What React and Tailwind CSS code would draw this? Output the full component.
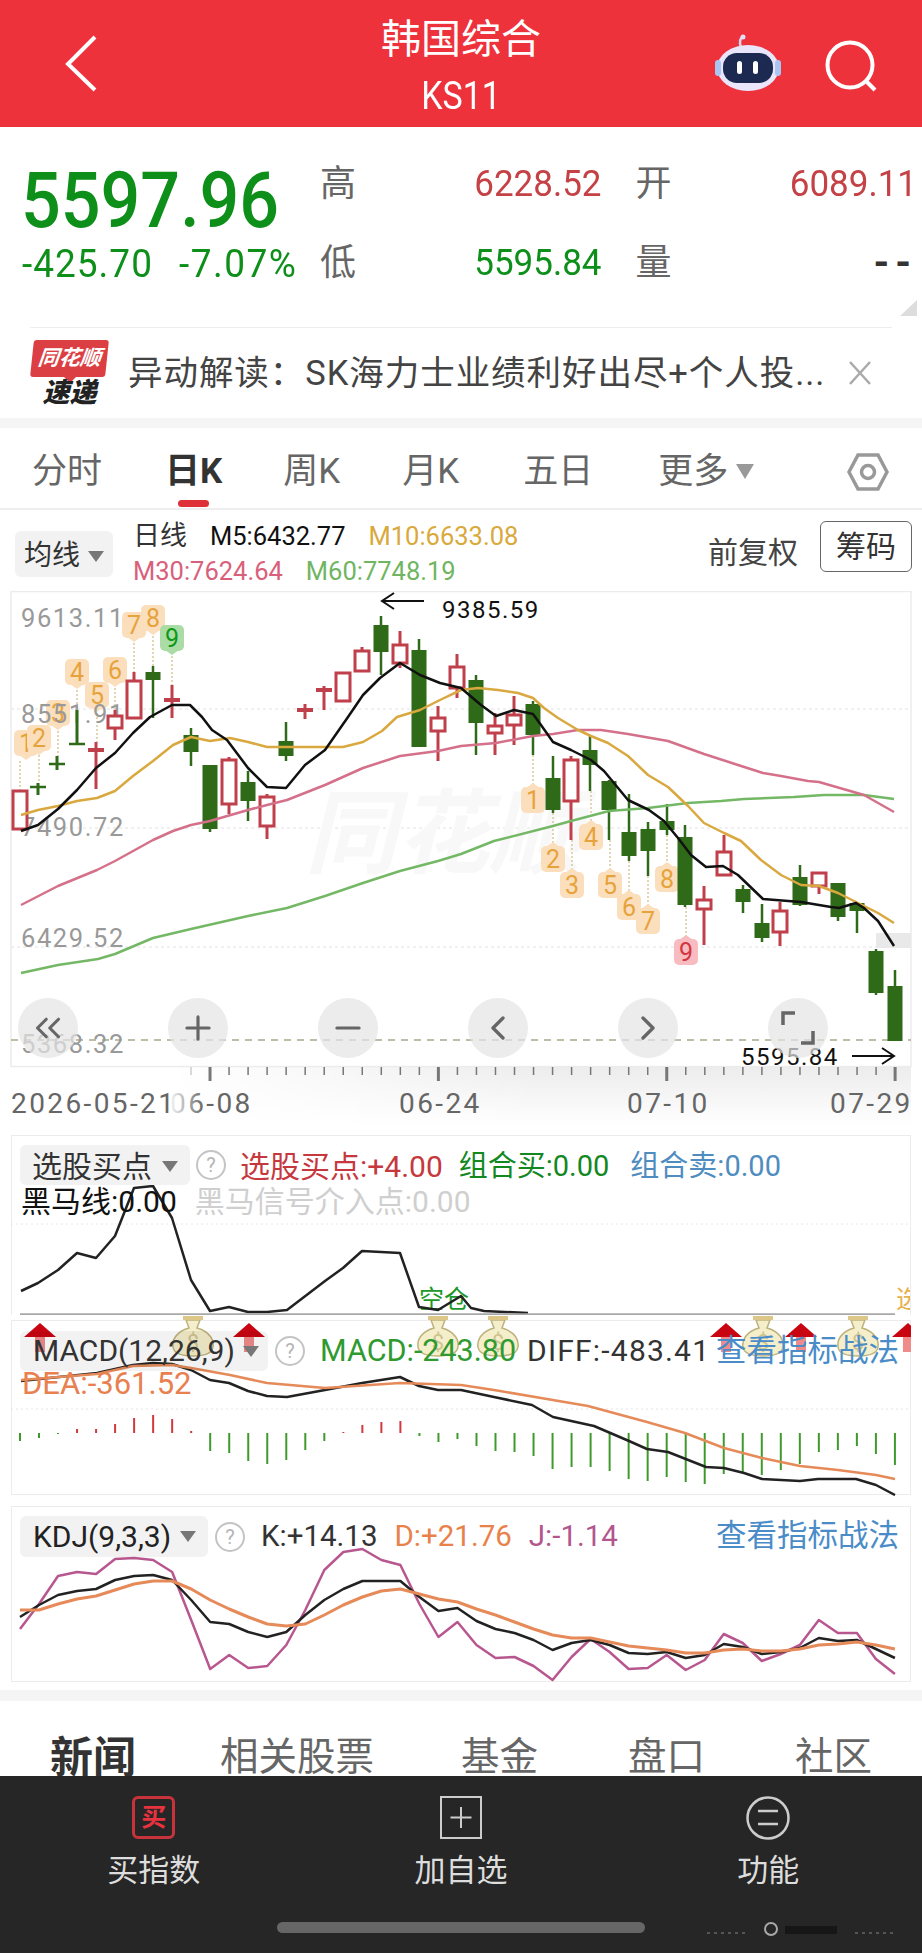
import React from 'react';
import { ChevronsLeft, ChevronLeft, ChevronRight, Plus, Minus } from 'lucide-react';

const RED = '#bf3f4a';
const GREEN = '#2f6a18';

// x, wick top, wick bottom, body top, body bottom, kind (g solid, r hollow, tg / tr flat tick)
const candles = [
  [20, 793, 831, 793, 831, 'r'],
  [38, 785, 797, 789, 789, 'tg'],
  [57, 758, 772, 766, 766, 'tg'],
  [77, 712, 746, 746, 746, 'tg'],
  [96, 744, 791, 752, 752, 'tr'],
  [115, 712, 742, 718, 730, 'r'],
  [134, 674, 720, 683, 720, 'r'],
  [153, 668, 720, 674, 682, 'g'],
  [172, 687, 720, 702, 702, 'tr'],
  [191, 730, 768, 737, 754, 'g'],
  [210, 767, 834, 767, 831, 'g'],
  [229, 759, 816, 762, 806, 'r'],
  [248, 773, 823, 784, 803, 'g'],
  [267, 796, 841, 799, 828, 'r'],
  [286, 724, 763, 743, 758, 'g'],
  [305, 706, 721, 712, 712, 'tr'],
  [324, 688, 712, 692, 692, 'tr'],
  [343, 675, 703, 675, 703, 'r'],
  [362, 649, 673, 653, 673, 'r'],
  [381, 618, 677, 627, 654, 'g'],
  [400, 633, 670, 647, 665, 'r'],
  [419, 641, 749, 652, 749, 'g'],
  [438, 708, 763, 720, 733, 'r'],
  [457, 656, 700, 669, 690, 'r'],
  [476, 677, 757, 682, 725, 'g'],
  [495, 715, 757, 728, 735, 'r'],
  [514, 698, 747, 717, 727, 'r'],
  [533, 703, 757, 706, 737, 'g'],
  [553, 758, 815, 780, 812, 'g'],
  [571, 758, 842, 762, 803, 'r'],
  [590, 737, 793, 752, 767, 'g'],
  [609, 782, 842, 783, 812, 'g'],
  [629, 796, 863, 834, 858, 'g'],
  [648, 824, 878, 831, 853, 'g'],
  [667, 806, 837, 823, 832, 'g'],
  [685, 827, 909, 839, 907, 'g'],
  [704, 888, 947, 902, 911, 'r'],
  [724, 837, 877, 854, 877, 'r'],
  [743, 887, 915, 891, 904, 'g'],
  [762, 906, 944, 925, 940, 'g'],
  [780, 904, 948, 913, 934, 'r'],
  [800, 867, 908, 879, 907, 'g'],
  [819, 874, 896, 875, 888, 'r'],
  [838, 885, 923, 885, 919, 'g'],
  [857, 905, 935, 905, 913, 'g'],
  [876, 951, 997, 953, 995, 'g'],
  [895, 972, 1043, 988, 1043, 'g'],
];

const m5 = '21,833 38,827 58,811 77,792 96,770 115,755 133,735 150,719 172,707 190,707 202,719 212,732 227,742 248,770 267,789 286,790 305,767 325,752 348,719 363,697 380,680 400,665 420,677 440,685 461,690 481,707 496,718 514,712 533,716 541,727 553,744 571,752 591,762 604,773 628,802 649,812 664,823 678,840 691,857 706,869 723,868 738,877 763,901 801,904 831,909 839,910 856,905 864,910 878,923 894,948';
const m10 = '21,817 38,812 58,808 77,803 97,800 115,793 133,778 153,763 173,747 191,739 210,743 230,740 248,744 267,749 286,749 305,749 325,749 343,749 363,744 382,733 397,719 420,712 440,702 461,692 478,690 498,692 518,695 533,700 544,710 558,720 578,732 591,738 608,745 628,758 648,777 668,789 688,808 704,825 724,835 741,843 761,862 781,877 801,887 819,888 838,895 858,905 878,915 894,925';
const m30 = '21,907 58,888 97,872 115,863 153,842 173,833 191,827 210,823 248,812 267,807 287,802 325,787 363,770 400,758 438,753 461,748 496,745 533,738 553,736 578,732 601,732 628,736 668,743 704,756 738,767 763,775 781,778 808,783 819,784 864,797 894,814';
const m60 = '21,975 58,967 98,961 115,956 153,940 191,931 248,918 287,910 325,898 363,885 400,873 438,863 461,856 494,843 553,828 571,823 609,813 648,810 688,805 721,803 744,801 794,799 824,797 864,797 894,801';

const horse = '21,1293 38,1285 58,1272 77,1255 96,1260 115,1238 134,1190 153,1188 172,1220 191,1282 210,1313 229,1309 248,1314 267,1314 287,1312 325,1283 343,1270 362,1253 400,1255 419,1309 438,1312 461,1298 471,1310 484,1313 528,1315';

const diff = '21,1383 97,1375 133,1367 153,1365 172,1366 191,1372 210,1382 229,1385 248,1393 267,1398 287,1399 325,1392 362,1385 400,1379 419,1388 438,1392 461,1392 494,1399 532,1407 553,1419 594,1428 629,1443 647,1451 668,1454 706,1469 724,1470 744,1475 762,1481 800,1483 818,1481 856,1481 876,1487 895,1497';
const dea = '21,1382 97,1376 133,1368 172,1367 191,1370 230,1377 267,1385 325,1390 400,1385 461,1387 494,1392 541,1400 588,1408 647,1424 685,1435 724,1450 762,1460 800,1468 838,1472 876,1477 895,1481';
const macdBars = [-8, -5, -1, 4, 4, 9, 15, 18, 14, 2, -18, -20, -28, -31, -27, -17, -8, 1, 8, 11, 12, -3, -9, -6, -13, -18, -19, -23, -36, -34, -34, -38, -46, -48, -44, -49, -51, -41, -40, -42, -37, -31, -19, -17, -13, -21, -32];

const series = (ys) => ys.map((y, i) => `${20 + i * 19.02},${y}`).join(' ');
const kdjJ = [1632, 1607, 1579, 1575, 1577, 1562, 1561, 1563, 1575, 1623, 1672, 1658, 1671, 1669, 1648, 1613, 1573, 1555, 1552, 1563, 1568, 1607, 1640, 1625, 1648, 1661, 1660, 1669, 1683, 1660, 1642, 1655, 1672, 1671, 1658, 1673, 1663, 1637, 1646, 1664, 1657, 1648, 1623, 1636, 1636, 1662, 1677];
const kdjK = [1620, 1608, 1598, 1594, 1592, 1583, 1579, 1578, 1583, 1603, 1625, 1627, 1635, 1640, 1635, 1618, 1603, 1592, 1584, 1584, 1584, 1600, 1614, 1611, 1624, 1632, 1636, 1643, 1653, 1646, 1643, 1648, 1656, 1657, 1655, 1661, 1658, 1647, 1650, 1657, 1655, 1651, 1641, 1644, 1643, 1652, 1661];
const kdjD = [1613, 1613, 1607, 1602, 1599, 1593, 1587, 1584, 1584, 1592, 1603, 1612, 1620, 1627, 1629, 1627, 1618, 1608, 1600, 1594, 1592, 1597, 1602, 1605, 1612, 1618, 1625, 1632, 1638, 1641, 1641, 1645, 1649, 1651, 1653, 1656, 1656, 1653, 1652, 1654, 1654, 1652, 1648, 1647, 1645, 1648, 1652];

// n, x, y (centre), direction of the tip, dashed line to the candle
const badges = [
  ['1', 26, 745, 'down', [20, 763, 793]],
  ['2', 39, 740, 'down', [39, 753, 785]],
  ['3', 58, 715, 'down', [58, 729, 758]],
  ['4', 77, 674, 'down', [77, 688, 712]],
  ['5', 97, 697, 'down', [97, 711, 744]],
  ['6', 115, 672, 'down', [115, 686, 712]],
  ['7', 134, 627, 'down', [134, 641, 674]],
  ['8', 153, 620, 'down', [153, 634, 668]],
  ['9', 172, 640, 'down', [172, 654, 687]],
  ['1', 533, 802, 'up', [533, 757, 788]],
  ['2', 553, 861, 'up', [553, 815, 847]],
  ['3', 572, 887, 'up', [572, 842, 873]],
  ['4', 591, 839, 'up', [591, 793, 825]],
  ['5', 610, 887, 'up', [610, 842, 873]],
  ['6', 629, 909, 'up', [629, 863, 895]],
  ['7', 648, 923, 'up', [648, 878, 909]],
  ['8', 667, 881, 'up', [667, 837, 867]],
  ['9', 686, 954, 'up', [686, 909, 940]],
];

const ticks = Array.from({ length: 38 }, (_, i) => 191 + i * 19.03);
const axisLabels = [['9613.11', 620], ['8551.91', 716], ['7490.72', 829], ['6429.52', 940], ['5368.32', 1046]];

function Line({ points, color, width = 2.5 }) {
  return <polyline points={points} fill="none" stroke={color} strokeWidth={width} strokeLinejoin="round" />;
}

function Candle({ c }) {
  const [x, top, bottom, bodyTop, bodyBottom, kind] = c;
  if (kind === 'tg' || kind === 'tr') {
    const color = kind === 'tg' ? GREEN : RED;
    return (
      <g stroke={color} strokeWidth="3">
        <line x1={x} x2={x} y1={top} y2={bottom} />
        <line x1={x - 8} x2={x + 8} y1={bodyTop} y2={bodyTop} strokeWidth={kind === 'tg' ? 2.5 : 4} />
      </g>
    );
  }
  if (kind === 'g') {
    return (
      <g>
        <line x1={x} x2={x} y1={top} y2={bottom} stroke={GREEN} strokeWidth="2.5" />
        <rect x={x - 7.5} y={bodyTop} width="15" height={bodyBottom - bodyTop} fill={GREEN} />
      </g>
    );
  }
  return (
    <g stroke={RED}>
      <line x1={x} x2={x} y1={top} y2={bodyTop} strokeWidth="3" />
      <line x1={x} x2={x} y1={bodyBottom} y2={bottom} strokeWidth="3" />
      <rect x={x - 7} y={bodyTop} width="14" height={bodyBottom - bodyTop} fill="#fff" strokeWidth="3" />
    </g>
  );
}

function Badge({ b }) {
  const [n, x, y, dir, dash] = b;
  let bg = '#fbdfbd';
  let fg = '#e6a33c';
  if (n === '9' && dir === 'down') { bg = '#acdca6'; fg = '#0c9a16'; }
  if (n === '9' && dir === 'up') { bg = '#f8bcc0'; fg = '#d23642'; }
  const tip = dir === 'down'
    ? `${x - 7},${y + 12} ${x + 7},${y + 12} ${x},${y + 17}`
    : `${x - 7},${y - 12} ${x + 7},${y - 12} ${x},${y - 17}`;
  return (
    <g>
      <line x1={dash[0]} x2={dash[0]} y1={dash[1]} y2={dash[2]} stroke="#d9c79c" strokeWidth="1.5" strokeDasharray="2 2" />
      <rect x={x - 12} y={y - 13} width="24" height="26" rx="5" fill={bg} />
      <polygon points={tip} fill={bg} />
      <text x={x} y={y + 9} textAnchor="middle" fontSize="25" fill={fg}>{n}</text>
    </g>
  );
}

function MoneyBag({ x }) {
  return (
    <g>
      <path d={`M${x - 7} 1322 L${x - 4} 1330 C${x - 18} 1334 ${x - 21} 1343 ${x - 20} 1349 C${x - 19} 1356 ${x - 10} 1358 ${x} 1358 C${x + 10} 1358 ${x + 19} 1356 ${x + 20} 1349 C${x + 21} 1343 ${x + 18} 1334 ${x + 4} 1330 L${x + 7} 1322 Z`} fill="#f5eecb" stroke="#bdb27c" strokeWidth="1.5" />
      <rect x={x - 10} y="1318" width="20" height="4" fill="#dcc789" />
      <text x={x} y="1352" textAnchor="middle" fontSize="22" fill="#cfc48f">$</text>
    </g>
  );
}

function RedArrow({ x }) {
  return (
    <g>
      <rect x={x - 5} y="1338" width="10" height="16" fill="#f08b8b" />
      <polygon points={`${x},1325 ${x + 16},1339 ${x - 16},1339`} fill="#c90512" />
    </g>
  );
}

function Help({ className }) {
  return (
    <span className={`flex h-[30px] w-[30px] shrink-0 items-center justify-center rounded-full border-2 border-[#c4c4c4] text-[20px] leading-none text-[#b5b5b5] ${className}`}>?</span>
  );
}

function Caret({ className }) {
  return <span className={`h-0 w-0 border-x-[8px] border-t-[11px] border-x-transparent border-t-[#777] ${className}`} />;
}

export default function App() {
  return (
    <div className="relative h-[1955px] w-[922px] overflow-hidden bg-white [font-family:Roboto,'Noto_Sans_CJK_SC',sans-serif]">
      {/* Header */}
      <header className="relative flex h-[127px] flex-col items-center bg-[#ee323c] text-white">
        <div className="mt-[19px] text-[40px] leading-[42px]">韩国综合</div>
        <div className="mt-[17px] origin-center scale-y-[1.15] text-[34px] leading-[34px]">KS11</div>
        <svg className="absolute left-[60px] top-[32px]" width="44" height="64" viewBox="0 0 44 64" fill="none" stroke="#fff" strokeWidth="4">
          <path d="M35 5 L8 32 L35 58" />
        </svg>
        <svg className="absolute left-[712px] top-[32px]" width="72" height="64" viewBox="0 0 72 64">
          <path d="M29 16 C27 9 28 6 31 5" fill="none" stroke="#d9d4f2" strokeWidth="2.5" />
          <circle cx="31" cy="5" r="2.5" fill="#e4def7" />
          <ellipse cx="36" cy="36" rx="31" ry="23" fill="#e9e6fb" />
          <rect x="3" y="28" width="6" height="16" rx="3" fill="#a9c6f3" />
          <rect x="63" y="28" width="6" height="16" rx="3" fill="#a9c6f3" />
          <rect x="11" y="21" width="50" height="30" rx="14" fill="#1c2a52" />
          <rect x="25" y="29" width="5" height="13" rx="2.5" fill="#fff" />
          <rect x="41" y="29" width="5" height="13" rx="2.5" fill="#fff" />
        </svg>
        <svg className="absolute left-[820px] top-[36px]" width="62" height="60" viewBox="0 0 62 60" fill="none" stroke="#fff" strokeWidth="4">
          <circle cx="30" cy="29" r="22.5" />
          <path d="M46 45 L55 54" />
        </svg>
      </header>

      {/* Quote */}
      <section className="flex h-[200px]">
        <div className="w-[320px] shrink-0 pl-[21px] pt-[33px] text-[#0d8f1a]">
          <div className="origin-center scale-y-[1.12] text-[70px] font-medium leading-[80px]">5597.96</div>
          <div className="ml-[1px] mt-[1px] flex scale-y-[1.06] gap-[26px] text-[37px] leading-[46px]">
            <span className="tracking-[1px]">-425.70</span>
            <span className="tracking-[1.5px]">-7.07%</span>
          </div>
        </div>
        <div className="grid h-[175px] w-[597px] grid-cols-2 grid-rows-2 gap-x-[34px] pt-[17px] text-[36px] leading-[42px] text-[#666]">
          <div className="flex items-center justify-between"><span>高</span><span className="scale-y-[1.08] text-[35px] text-[#c44146]">6228.52</span></div>
          <div className="flex items-center justify-between"><span>开</span><span className="scale-y-[1.08] text-[35px] text-[#c44146]">6089.11</span></div>
          <div className="flex items-center justify-between"><span>低</span><span className="scale-y-[1.08] text-[35px] text-[#0d8f1a]">5595.84</span></div>
          <div className="flex items-center justify-between"><span>量</span><span className="text-[40px] font-bold tracking-[6px] text-[#333]">--</span></div>
        </div>
        <span className="absolute left-[900px] top-[300px] h-0 w-0 border-b-[16px] border-l-[17px] border-b-[#ddd] border-l-transparent" />
      </section>

      {/* News */}
      <div className="mx-[30px] border-t border-[#eee]" />
      <section className="flex h-[90px] items-center">
        <div className="ml-[32px] flex w-[75px] shrink-0 flex-col items-center">
          <div className="flex h-[37px] w-[75px] -skew-x-6 items-center justify-center rounded-[3px] bg-[#dc3f43] text-[21px] font-bold italic leading-none text-white">同花顺</div>
          <span className="h-0 w-0 border-x-[6px] border-t-[6px] border-x-transparent border-t-[#dc3f43]" />
          <div className="-mt-[4px] text-[27px] font-black italic leading-[28px] text-[#222]">速递</div>
        </div>
        <div className="ml-[21px] w-[712px] whitespace-nowrap text-[34.5px] leading-none tracking-[0.95px] text-[#444]">异动解读：SK海力士业绩利好出尽+个人投...</div>
        <svg className="ml-[5px]" width="30" height="30" viewBox="0 0 30 30" stroke="#aaa" strokeWidth="2.5">
          <path d="M5 4 L25 26 M25 4 L5 26" />
        </svg>
      </section>
      <div className="h-[10px] bg-[#f5f5f5]" />

      {/* Period tabs */}
      <nav className="relative flex h-[82px] items-center border-b-2 border-[#eee] pt-[7px] text-[35px] leading-none text-[#666]">
        <span className="ml-[32px]">分时</span>
        <span className="relative ml-[63px] font-bold text-[#333]">日K</span>
        <span className="ml-[61px]">周K</span>
        <span className="ml-[62px]">月K</span>
        <span className="ml-[64px]">五日</span>
        <span className="ml-[65px]">更多</span>
        <Caret className="ml-[8px] border-x-[9px] border-t-[15px] border-t-[#999]" />
        <svg className="ml-[93px]" width="42" height="40" viewBox="0 0 42 40" fill="none" stroke="#999" strokeWidth="3.5">
          <path d="M11 3 H31 L40 20 L31 37 H11 L2 20 Z" />
          <circle cx="21" cy="20" r="6.5" />
        </svg>
        <span className="absolute bottom-[1px] left-[178px] h-[7px] w-[31px] rounded-full bg-[#dd3038]" />
      </nav>

      {/* Moving average legend */}
      <section className="relative flex h-[81px]">
        <div className="ml-[15px] mt-[21px] flex h-[46px] w-[98px] items-center rounded-md bg-[#f2f2f2] pl-[9px] pt-[4px] text-[28px] leading-none text-[#333]">
          均线<Caret className="ml-[8px]" />
        </div>
        <div className="ml-[20px] mt-[9px] text-[25.5px] leading-[35px]">
          <div className="flex items-center">
            <span className="text-[27px] text-[#333]">日线</span>
            <span className="ml-[23px] text-[#111]">M5:6432.77</span>
            <span className="ml-[23px] text-[#d9a93c]">M10:6633.08</span>
          </div>
          <div className="flex">
            <span className="text-[#d9607b]">M30:7624.64</span>
            <span className="ml-[23px] text-[#6fb562]">M60:7748.19</span>
          </div>
        </div>
        <span className="absolute left-[708px] top-[25px] text-[30px] leading-[36px] text-[#444]">前复权</span>
        <span className="absolute left-[820px] top-[11px] flex h-[51px] w-[92px] items-center justify-center rounded-md border border-[#666] text-[30px] leading-none text-[#333]">筹码</span>
      </section>

      {/* Main chart */}
      <section className="relative h-[544px]">
        <svg className="block" width="922" height="544" viewBox="0 593 922 544" fontFamily="Roboto, 'Noto Sans CJK SC', sans-serif">
          <defs>
            <linearGradient id="shade" x1="0" x2="0" y1="0" y2="1">
              <stop offset="0" stopColor="#ececec" />
              <stop offset="1" stopColor="#ffffff" />
            </linearGradient>
            <linearGradient id="fadeIn" x1="0" x2="1" y1="0" y2="0">
              <stop offset="0" stopColor="#000" />
              <stop offset="0.5" stopColor="#fff" />
            </linearGradient>
            <linearGradient id="veil" x1="0" x2="1" y1="0" y2="0">
              <stop offset="0" stopColor="#fff" stopOpacity="1" />
              <stop offset="1" stopColor="#fff" stopOpacity="0" />
            </linearGradient>
            <mask id="shadeMask">
              <rect x="170" y="1068" width="741" height="60" fill="url(#fadeIn)" />
            </mask>
          </defs>
          <rect x="170" y="1068" width="741" height="60" fill="url(#shade)" mask="url(#shadeMask)" />
          <rect x="11" y="593.5" width="900" height="475" fill="none" stroke="#ececec" strokeWidth="1.5" />
          {[711, 830, 949].map((y) => (
            <line key={y} x1="11" x2="911" y1={y} y2={y} stroke="#e2e2e2" strokeDasharray="3 3" />
          ))}
          <line x1="11" x2="911" y1="1042" y2="1042" stroke="#a9a88a" strokeWidth="1.5" strokeDasharray="7 6" />
          <text x="305" y="868" fontSize="92" fontStyle="italic" fontWeight="700" fill="#f8f8f8">同花顺</text>
          <rect x="876" y="935" width="35" height="15" fill="#e9e9e9" />
          {badges.map((b) => <Badge key={`${b[0]}-${b[3]}`} b={b} />)}
          {axisLabels.map(([t, y]) => (
            <text key={t} x="21" y={y + 9} fontSize="25.5" letterSpacing="1.6" fill="#999">{t}</text>
          ))}
          {candles.map((c) => <Candle key={c[0]} c={c} />)}
          <Line points={m60} color="#74b866" />
          <Line points={m30} color="#d5708a" />
          <Line points={m10} color="#d9a83f" />
          <Line points={m5} color="#111" />

          <path d="M424 603 H382 M394 595 L382 603 L394 611" fill="none" stroke="#111" strokeWidth="2" />
          <text x="442" y="620" fontSize="24" letterSpacing="1.5" fill="#111">9385.59</text>
          <text x="741" y="1067" fontSize="24" letterSpacing="1.5" fill="#111">5595.84</text>
          <path d="M852 1058 H894 M882 1050 L894 1058 L882 1066" fill="none" stroke="#111" strokeWidth="2" />

          {ticks.map((x, i) => {
            const major = i === 1 || i === 13 || i === 25 || i === 37;
            return <line key={x} x1={x} x2={x} y1="1069" y2={major ? 1083 : 1077} stroke={i === 0 ? '#ccc' : '#777'} strokeWidth={major ? 3 : 1.5} />;
          })}

          <g fontSize="28" letterSpacing="2.4" fill="#666">
            <text x="170" y="1115">06-08</text>
            <rect x="168" y="1085" width="36" height="36" fill="url(#veil)" />
            <text x="11" y="1115">2026-05-21</text>
            <text x="399" y="1115">06-24</text>
            <text x="627" y="1115">07-10</text>
            <text x="830" y="1115">07-29</text>
          </g>
        </svg>
        <div className="absolute left-[18px] top-[407px] flex gap-[90px] text-[#666]">
          <button className="flex h-[60px] w-[60px] items-center justify-center rounded-full bg-[#e4e4e4]/70"><ChevronsLeft size={42} strokeWidth={1.8} /></button>
          <button className="flex h-[60px] w-[60px] items-center justify-center rounded-full bg-[#e4e4e4]/70"><Plus size={38} strokeWidth={2} /></button>
          <button className="flex h-[60px] w-[60px] items-center justify-center rounded-full bg-[#e4e4e4]/70"><Minus size={38} strokeWidth={2} /></button>
          <button className="flex h-[60px] w-[60px] items-center justify-center rounded-full bg-[#e4e4e4]/70"><ChevronLeft size={40} strokeWidth={2} /></button>
          <button className="flex h-[60px] w-[60px] items-center justify-center rounded-full bg-[#e4e4e4]/70"><ChevronRight size={40} strokeWidth={2} /></button>
          <button className="flex h-[60px] w-[60px] items-center justify-center rounded-full bg-[#e4e4e4]/70">
            <svg width="36" height="36" viewBox="0 0 36 36" fill="none" stroke="#666" strokeWidth="3.5">
              <path d="M15 3 H3 V15 M33 21 V33 H21" />
            </svg>
          </button>
        </div>
      </section>

      {/* Stock-pick indicator */}
      <section className="relative ml-[11px] h-[180px] w-[900px] overflow-hidden border-x border-t border-[#ececec]">
        <svg className="absolute left-[-1px] top-[-1px]" width="900" height="181" viewBox="11 1137 900 181" fontFamily="Roboto, 'Noto Sans CJK SC', sans-serif">
          <line x1="11" x2="911" y1="1226" y2="1226" stroke="#e8e8e8" strokeDasharray="2 3" />
          <text x="419" y="1310" fontSize="25" fill="#1b9a2b">空仓</text>
          <text x="896" y="1310" fontSize="25" fill="#e6b04e">选</text>
          <Line points={horse} color="#222" />
          <line x1="20" x2="895" y1="1316.5" y2="1316.5" stroke="#a8a8a8" strokeWidth="2.5" />
        </svg>
        <div className="relative mt-[9px] flex h-[40px] items-center pl-[8px]">
          <div className="flex h-[40px] w-[170px] items-center rounded-md bg-[#f2f2f2] pl-[12px] pt-[3px] text-[30px] leading-none text-[#333]">
            选股买点<Caret className="ml-[10px]" />
          </div>
          <Help className="ml-[6px]" />
          <span className="ml-[14px] pt-[3px] text-[30px] leading-none text-[#c6383e]">选股买点:+4.00</span>
          <span className="ml-[16px] pt-[3px] text-[29px] leading-none text-[#13881f]">组合买:0.00</span>
          <span className="ml-[21px] pt-[3px] text-[29px] leading-none text-[#4f8cc0]">组合卖:0.00</span>
        </div>
        <div className="relative ml-[9px] mt-[3px] flex text-[30px] leading-[28px]">
          <span className="text-[#111]">黑马线:0.00</span>
          <span className="ml-[18px] text-[#cfcfcf]">黑马信号介入点:0.00</span>
        </div>
      </section>

      <div className="h-[5px]" />

      {/* MACD */}
      <section className="relative ml-[11px] h-[175px] w-[900px] border-x border-b border-t border-[#ececec]">
        <svg className="absolute left-[-1px] top-[-5px] overflow-hidden" width="900" height="180" viewBox="11 1318 900 180" fontFamily="Roboto, 'Noto Sans CJK SC', sans-serif">
          <line x1="11" x2="911" y1="1411" y2="1411" stroke="#e4e4e4" strokeDasharray="2 3" />
          {macdBars.map((v, i) => (
            <line key={i} x1={20 + i * 19.02} x2={20 + i * 19.02} y1="1435" y2={1435 - v} stroke={v > 0 ? '#d2383e' : '#3f9a2c'} strokeWidth="2" />
          ))}
          <Line points={diff} color="#222" />
          <Line points={dea} color="#e58a58" />
          <RedArrow x={40} />
          <RedArrow x={249} />
          <RedArrow x={726} />
          <RedArrow x={801} />
          <RedArrow x={908} />
          {[193, 438, 498, 763, 858].map((x) => <MoneyBag key={x} x={x} />)}
        </svg>
        <div className="relative mt-[10px] flex h-[40px] items-center pl-[8px]">
          <div className="flex h-[40px] w-[248px] items-center rounded-md bg-black/[0.05] pl-[13px] text-[30px] leading-none text-[#333]">
            MACD(12,26,9)<Caret className="ml-[8px]" />
          </div>
          <Help className="ml-[7px]" />
          <span className="ml-[15px] text-[30.5px] leading-none text-[#2f9a30]">MACD:-243.80</span>
          <span className="ml-[11px] text-[30px] leading-none tracking-[1.2px] text-[#333]">DIFF:-483.41</span>
          <span className="absolute left-[704px] text-[30.5px] leading-none text-[#4a8cc8]">查看指标战法</span>
        </div>
        <div className="relative ml-[10px] mt-[2px] text-[31px] leading-[22px] text-[#e8804f]">DEA:-361.52</div>
      </section>

      <div className="h-[11px]" />

      {/* KDJ */}
      <section className="relative ml-[11px] h-[176px] w-[900px] border border-[#ececec]">
        <svg className="absolute left-[-12px] top-[-1px]" width="922" height="176" viewBox="0 1509 922 176">
          <Line points={series(kdjJ)} color="#b8578f" />
          <Line points={series(kdjK)} color="#222" />
          <Line points={series(kdjD)} color="#e58a58" width={3} />
        </svg>
        <div className="relative mt-[9px] flex h-[41px] items-center pl-[8px]">
          <div className="flex h-[41px] w-[188px] items-center rounded-md bg-black/[0.05] pl-[13px] text-[30px] leading-none text-[#222]">
            KDJ(9,3,3)<Caret className="ml-[9px]" />
          </div>
          <Help className="ml-[7px]" />
          <span className="ml-[16px] text-[29.5px] leading-none text-[#333]">K:+14.13</span>
          <span className="ml-[17px] text-[29.5px] leading-none text-[#e8824a]">D:+21.76</span>
          <span className="ml-[17px] text-[29.5px] leading-none text-[#b3568e]">J:-1.14</span>
          <span className="absolute left-[704px] text-[30.5px] leading-none text-[#4a8cc8]">查看指标战法</span>
        </div>
      </section>

      <div className="h-[8px]" />
      <div className="h-[11px] bg-[#f5f5f5]" />

      {/* Detail tabs */}
      <nav className="flex h-[75px] items-start pt-[33px] text-[38.5px] leading-[46px] text-[#666]">
        <span className="ml-[50px] text-[43px] font-bold leading-[48px] text-[#333]">新闻</span>
        <span className="ml-[84px]">相关股票</span>
        <span className="ml-[87px]">基金</span>
        <span className="ml-[90px]">盘口</span>
        <span className="ml-[90px]">社区</span>
      </nav>

      {/* Bottom bar */}
      <footer className="relative h-[177px] bg-[#262626] pt-[20px] text-[#ddd]">
        <div className="grid grid-cols-3 text-[31px] leading-[34px]">
          <div className="flex flex-col items-center">
            <div className="flex h-[43px] w-[43px] items-center justify-center rounded-[6px] border-[3px] border-[#c8323a] text-[25px] font-bold leading-none text-[#e8323f]">买</div>
            <div className="mt-[15px]">买指数</div>
          </div>
          <div className="flex flex-col items-center">
            <svg width="42" height="43" viewBox="0 0 42 43" fill="none" stroke="#ccc" strokeWidth="2">
              <rect x="1" y="1" width="40" height="41" />
              <path d="M21 11 V32 M10.5 21.5 H31.5" />
            </svg>
            <div className="mt-[15px]">加自选</div>
          </div>
          <div className="flex flex-col items-center">
            <svg width="44" height="44" viewBox="0 0 44 44" fill="none" stroke="#ccc" strokeWidth="2.5">
              <circle cx="22" cy="22" r="20.5" />
              <path d="M12 15 H32 M12 28 H32" />
            </svg>
            <div className="mt-[14px]">功能</div>
          </div>
        </div>
        <div className="mx-auto mt-[34px] h-[11px] w-[368px] rounded-full bg-[#666]" />
        <svg className="absolute left-[705px] top-[125px]" width="195" height="36" viewBox="0 0 195 36">
          <rect x="80" y="25" width="52" height="8" fill="#161616" />
          <circle cx="66" cy="28" r="6" fill="none" stroke="#a8a8a8" strokeWidth="2" />
          <path d="M2 32 H42 M150 32 H190" stroke="#666" strokeWidth="1.5" strokeDasharray="3 4" />
        </svg>
      </footer>
    </div>
  );
}
